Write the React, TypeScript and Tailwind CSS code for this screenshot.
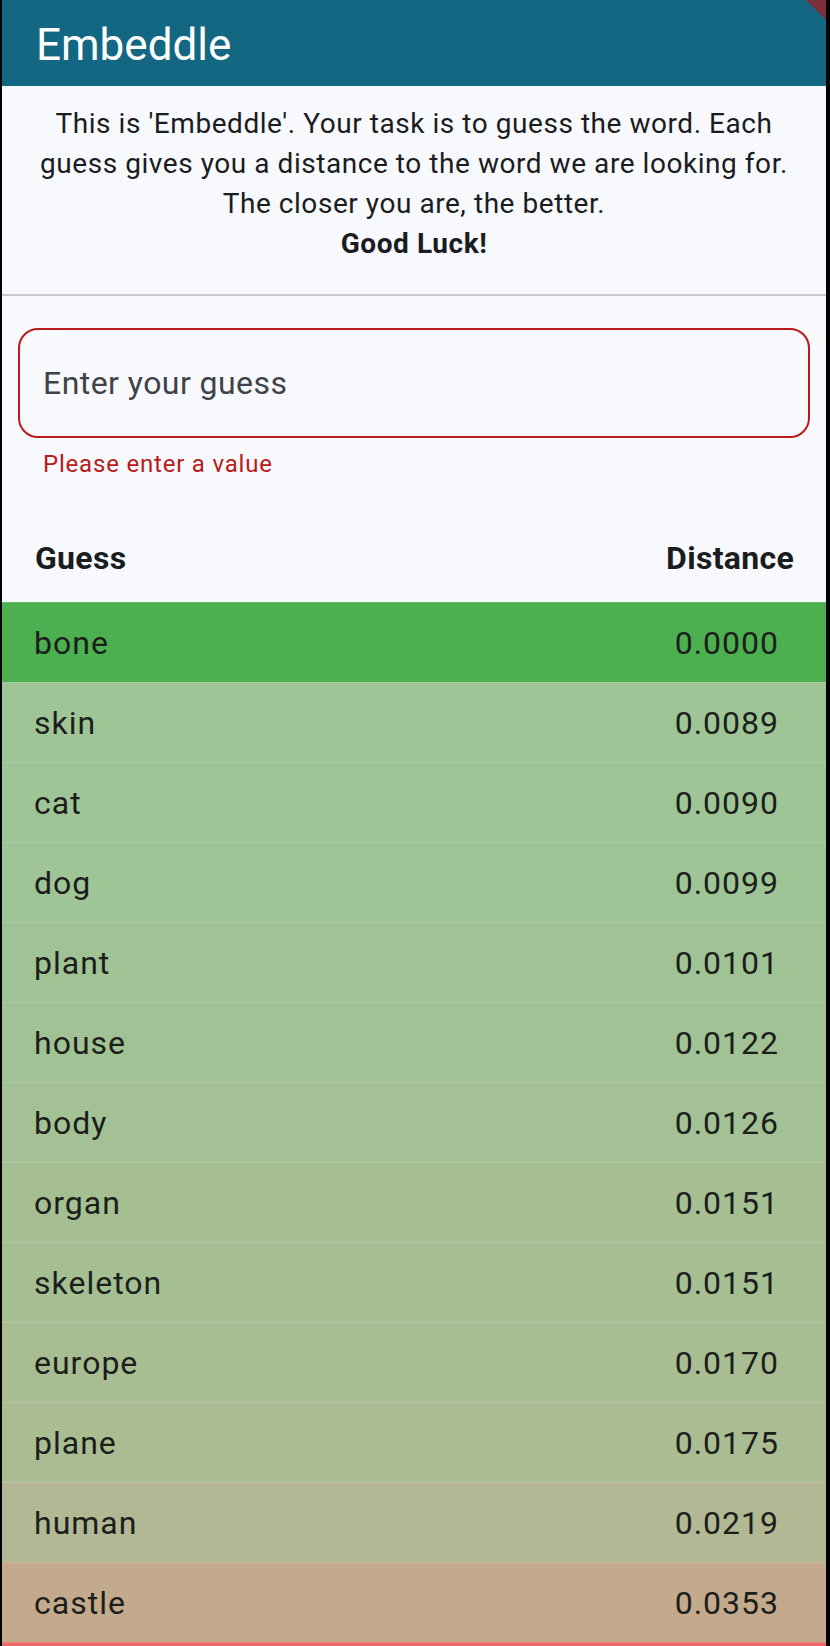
import React from "react";

interface GuessRow {
  word: string;
  distance: string;
  color: string;
}

// colours fade from green (closest) to reddish (farthest)
const rows: GuessRow[] = [
  { word: "bone", distance: "0.0000", color: "bg-[#4caf50]" },
  { word: "skin", distance: "0.0089", color: "bg-[#9fc596]" },
  { word: "cat", distance: "0.0090", color: "bg-[#9fc596]" },
  { word: "dog", distance: "0.0099", color: "bg-[#9fc495]" },
  { word: "plant", distance: "0.0101", color: "bg-[#a0c395]" },
  { word: "house", distance: "0.0122", color: "bg-[#a1c294]" },
  { word: "body", distance: "0.0126", color: "bg-[#a3c194]" },
  { word: "organ", distance: "0.0151", color: "bg-[#a5bf93]" },
  { word: "skeleton", distance: "0.0151", color: "bg-[#a5bf93]" },
  { word: "europe", distance: "0.0170", color: "bg-[#a9bd92]" },
  { word: "plane", distance: "0.0175", color: "bg-[#aabc92]" },
  { word: "human", distance: "0.0219", color: "bg-[#b1b893]" },
  { word: "castle", distance: "0.0353", color: "bg-[#c4aa8c]" },
];

function GuessTableRow({ row }: { row: GuessRow }) {
  return (
    <div
      className={`${row.color} h-[80px] shrink-0 flex items-center justify-between pl-[32px] pr-[47px] border-t border-[rgba(255,255,255,0.14)]`}
    >
      <span className="text-[32px] leading-[40px] tracking-[1px] text-[#1c1e1b]">
        {row.word}
      </span>
      <span className="text-[32px] leading-[40px] tracking-[1px] text-[#1c1e1b]">
        {row.distance}
      </span>
    </div>
  );
}

export default function App() {
  return (
    <div className="w-[830px] h-[1646px] bg-black flex overflow-hidden font-[family-name:Roboto,sans-serif]">
      <div className="ml-[2px] w-[824px] h-full relative bg-[#f7f9fc] flex flex-col overflow-hidden">
        {/* app bar */}
        <div className="h-[86px] shrink-0 bg-[#136782] pl-[34px] pt-[23px]">
          <h1 className="text-[44px] leading-[44px] text-white">Embeddle</h1>
        </div>

        {/* debug banner corner */}
        <div className="absolute top-0 right-0 w-[20px] h-[20px] bg-[#7c2f38] [clip-path:polygon(0_0,100%_0,100%_100%)]" />

        {/* intro */}
        <p className="pt-[18px] px-[16px] text-center text-[28px] leading-[40px] tracking-[0.55px] text-[#1b1c1f]">
          This is 'Embeddle'. Your task is to guess the word. Each
          <br />
          guess gives you a distance to the word we are looking for.
          <br />
          The closer you are, the better.
          <br />
          <span className="font-bold">Good Luck!</span>
        </p>

        <div className="mt-[30px] h-[2px] shrink-0 bg-[#c8cacf]" />

        {/* guess input */}
        <div className="px-[16px] pt-[32px] shrink-0">
          <div className="h-[110px] border-2 border-[#ba1a1a] rounded-[20px] flex items-center pl-[23px]">
            <span className="text-[32px] leading-[40px] tracking-[0.45px] text-[#3f4349]">
              Enter your guess
            </span>
          </div>
          <div className="mt-[10px] pl-[25px] text-[24px] leading-[32px] tracking-[0.8px] text-[#ba1a1a]">
            Please enter a value
          </div>
        </div>

        {/* table header */}
        <div className="h-[122px] shrink-0 flex justify-between pl-[33px] pr-[32px] pt-[58px]">
          <span className="text-[32px] leading-[40px] font-bold tracking-[0.3px] text-[#1a1c1e]">
            Guess
          </span>
          <span className="text-[32px] leading-[40px] font-bold tracking-[0.3px] text-[#1a1c1e]">
            Distance
          </span>
        </div>

        {/* guesses */}
        <div className="flex flex-col">
          {rows.map((row) => (
            <GuessTableRow key={row.word} row={row} />
          ))}
          {/* next row, scrolled just out of view */}
          <div className="h-[80px] shrink-0 bg-[#ef6b6b] border-t border-[rgba(255,255,255,0.14)]" />
        </div>
      </div>
      <div className="w-[4px] bg-black" />
    </div>
  );
}
